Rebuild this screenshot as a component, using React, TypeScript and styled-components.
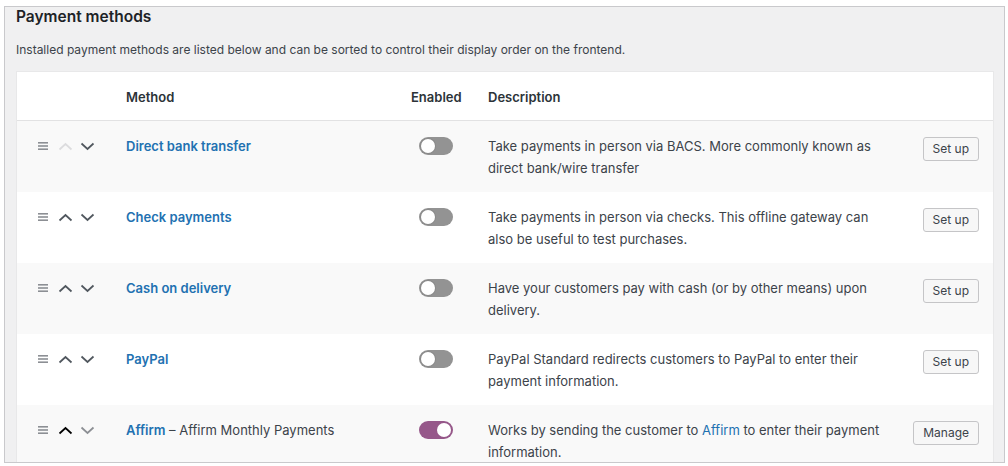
import React from "react";
import styled, { createGlobalStyle } from "styled-components";

const Global = createGlobalStyle`
  html, body { margin: 0; padding: 0; background: #ffffff; }
  body { font-family: "Inter", "Liberation Sans", Arial, sans-serif; color: #3c434a; -webkit-font-smoothing: antialiased; }
  * { box-sizing: border-box; }
`;

const Frame = styled.div`
  margin: 6px 0 0 4px;
  width: 1001px;
  height: 457px;
  border: 1px solid #c9c9cc;
  background: #f0f0f1;
  padding: 0 11px 0 12px;
  overflow: hidden;
`;

const Title = styled.h2`
  margin: 0 0 0 -1px;
  font-size: 15.5px;
  line-height: 20px;
  font-weight: 600;
  color: #1d2327;
`;

const Intro = styled.p`
  margin: 13px 0 0 -1px;
  font-size: 12px;
  line-height: 20px;
  color: #3c434a;
`;

const Table = styled.div`
  margin-top: 12px;
  background: #ffffff;
  box-shadow: 0 0 0 1px #e8e8e9;
`;

const Row = styled.div<{ $head?: boolean; $shade?: boolean }>`
  display: grid;
  grid-template-columns: 109px 285px 50px 430px 1fr;
  align-items: start;
  height: ${(p) => (p.$head ? "49px" : "71px")};
  padding: 14px 14px 0 0;
  background: ${(p) => (p.$shade ? "#f9f9f9" : "#ffffff")};
  border-bottom: ${(p) => (p.$head ? "1px solid #e2e2e3" : "none")};
`;

const HeadCell = styled.div<{ $center?: boolean; $pad?: number }>`
  font-size: 13px;
  line-height: 22px;
  font-weight: 600;
  color: #2c3338;
  text-align: ${(p) => (p.$center ? "center" : "left")};
  padding-left: ${(p) => p.$pad ?? 0}px;
`;

const SortCell = styled.div`
  display: flex;
  align-items: center;
  height: 22px;
  padding-left: 20px;
`;

const IconBtn = styled.span<{ $w?: number; $ml?: number }>`
  display: inline-flex;
  width: ${(p) => p.$w ?? 22}px;
  margin-left: ${(p) => p.$ml ?? 0}px;
  height: 22px;
  align-items: center;
  justify-content: center;
`;

const MethodCell = styled.div`
  font-size: 13px;
  line-height: 22px;
  color: #3c434a;
`;

const MethodLink = styled.a`
  color: #2271b1;
  font-weight: 600;
  text-decoration: none;
`;

const ToggleCell = styled.div`
  display: flex;
  justify-content: center;
  padding-top: 2px;
`;

const Toggle = styled.span<{ $on?: boolean }>`
  position: relative;
  display: inline-block;
  width: 34px;
  height: 18px;
  border-radius: 9px;
  background: ${(p) => (p.$on ? "#96588a" : "#939393")};
  &::after {
    content: "";
    position: absolute;
    top: 2px;
    left: ${(p) => (p.$on ? "18px" : "2px")};
    width: 14px;
    height: 14px;
    border-radius: 50%;
    background: #ffffff;
    box-shadow: 0 0 0 1px ${(p) => (p.$on ? "#96588a" : "#8a8a8a")};
  }
`;

const Desc = styled.div`
  padding-left: 27px;
  padding-right: 4px;
  font-size: 13px;
  line-height: 22px;
  color: #3c434a;
`;

const InlineLink = styled.a`
  color: #2271b1;
  text-decoration: none;
`;

const ActionCell = styled.div`
  display: flex;
  justify-content: flex-end;
  padding-top: 2px;
`;

const Button = styled.button`
  font-family: inherit;
  font-size: 12px;
  line-height: 22px;
  height: 24px;
  padding: 0 9px;
  border: 1px solid #c5c5c7;
  border-radius: 3px;
  background: #f7f7f7;
  color: #3c434a;
`;

const Handle = () => (
  <svg width="12" height="10" viewBox="0 0 12 10">
    <rect x="1" y="1" width="10" height="1.6" fill="#8c8f94" />
    <rect x="1" y="4.2" width="10" height="1.6" fill="#8c8f94" />
    <rect x="1" y="7.4" width="10" height="1.6" fill="#8c8f94" />
  </svg>
);

const Chevron = ({ up, color }: { up?: boolean; color: string }) => (
  <svg width="15" height="9" viewBox="0 0 15 9">
    <path
      d={up ? "M1.5 7.5 L7.5 2 L13.5 7.5" : "M1.5 1.5 L7.5 7 L13.5 1.5"}
      fill="none"
      stroke={color}
      strokeWidth="1.7"
    />
  </svg>
);

type Method = {
  name: string;
  extra?: string;
  desc: React.ReactNode;
  on?: boolean;
  action: string;
  upColor: string;
  downColor: string;
};

const methods: Method[] = [
  {
    name: "Direct bank transfer",
    desc: "Take payments in person via BACS. More commonly known as direct bank/wire transfer",
    action: "Set up",
    upColor: "#dcdcde",
    downColor: "#50575e",
  },
  {
    name: "Check payments",
    desc: "Take payments in person via checks. This offline gateway can also be useful to test purchases.",
    action: "Set up",
    upColor: "#50575e",
    downColor: "#50575e",
  },
  {
    name: "Cash on delivery",
    desc: "Have your customers pay with cash (or by other means) upon delivery.",
    action: "Set up",
    upColor: "#50575e",
    downColor: "#50575e",
  },
  {
    name: "PayPal",
    desc: "PayPal Standard redirects customers to PayPal to enter their payment information.",
    action: "Set up",
    upColor: "#50575e",
    downColor: "#50575e",
  },
  {
    name: "Affirm",
    extra: " – Affirm Monthly Payments",
    desc: (
      <>
        Works by sending the customer to <InlineLink href="#">Affirm</InlineLink> to enter their payment
        information.
      </>
    ),
    on: true,
    action: "Manage",
    upColor: "#000000",
    downColor: "#8c8f94",
  },
];

export default function App() {
  return (
    <>
      <Global />
      <Frame>
        <Title>Payment methods</Title>
        <Intro>
          Installed payment methods are listed below and can be sorted to control their display order on the frontend.
        </Intro>
        <Table>
          <Row $head>
            <div />
            <HeadCell>Method</HeadCell>
            <HeadCell $center>Enabled</HeadCell>
            <HeadCell $pad={27}>Description</HeadCell>
            <div />
          </Row>
          {methods.map((m, i) => (
            <Row key={m.name} $shade={i % 2 === 0}>
              <SortCell>
                <IconBtn $w={12}>
                  <Handle />
                </IconBtn>
                <IconBtn $ml={5}>
                  <Chevron up color={m.upColor} />
                </IconBtn>
                <IconBtn>
                  <Chevron color={m.downColor} />
                </IconBtn>
              </SortCell>
              <MethodCell>
                <MethodLink href="#">{m.name}</MethodLink>
                {m.extra}
              </MethodCell>
              <ToggleCell>
                <Toggle $on={m.on} />
              </ToggleCell>
              <Desc>{m.desc}</Desc>
              <ActionCell>
                <Button>{m.action}</Button>
              </ActionCell>
            </Row>
          ))}
        </Table>
      </Frame>
    </>
  );
}
